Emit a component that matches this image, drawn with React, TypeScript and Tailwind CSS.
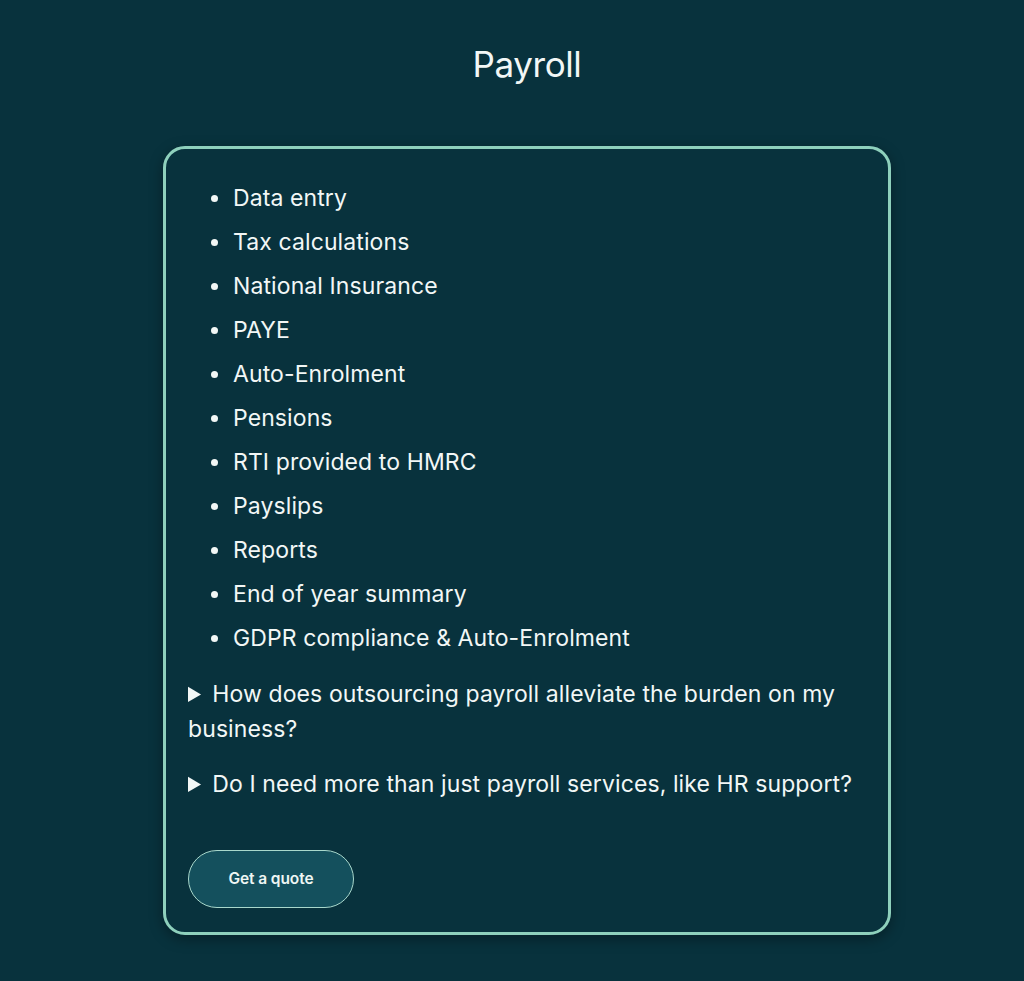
const items = [
  "Data entry",
  "Tax calculations",
  "National Insurance",
  "PAYE",
  "Auto-Enrolment",
  "Pensions",
  "RTI provided to HMRC",
  "Payslips",
  "Reports",
  "End of year summary",
  "GDPR compliance & Auto-Enrolment",
];

const faqs = [
  "How does outsourcing payroll alleviate the burden on my business?",
  "Do I need more than just payroll services, like HR support?",
];

export default function App() {
  return (
    <div className="min-h-[981px] bg-[#08323d] pl-[30px] font-['Inter',sans-serif] text-[#f2f7f6]">
      <h1 className="pt-[41px] text-center text-[35px] leading-[46px] font-normal tracking-[-0.4px]">
        Payroll
      </h1>
      <div className="mx-auto mt-[59px] w-[728px] rounded-[22px] border-[3px] border-[#8ed0bc] px-[22px] pt-[27px] pb-[24px] shadow-[0_4px_14px_rgba(0,0,0,0.35)]">
        <ul className="list-disc pl-[44px] text-[23px] leading-[44px] tracking-[0.1px] marker:text-[22px]">
          {items.map((item) => (
            <li key={item} className="pl-[1px]">
              {item}
            </li>
          ))}
        </ul>
        <div className="mt-[17px] flex flex-col gap-[20px]">
          {faqs.map((q) => (
            <details key={q}>
              <summary className="cursor-pointer text-[23px] leading-[35px] tracking-[0.1px]">
                {q}
              </summary>
            </details>
          ))}
        </div>
        <button
          type="button"
          className="mt-[48px] h-[58px] w-[166px] rounded-full border border-[#a9d8cc] bg-[#14505d] text-[15.5px] font-semibold tracking-[-0.1px] text-[#eef6f4]"
        >
          Get a quote
        </button>
      </div>
    </div>
  );
}
